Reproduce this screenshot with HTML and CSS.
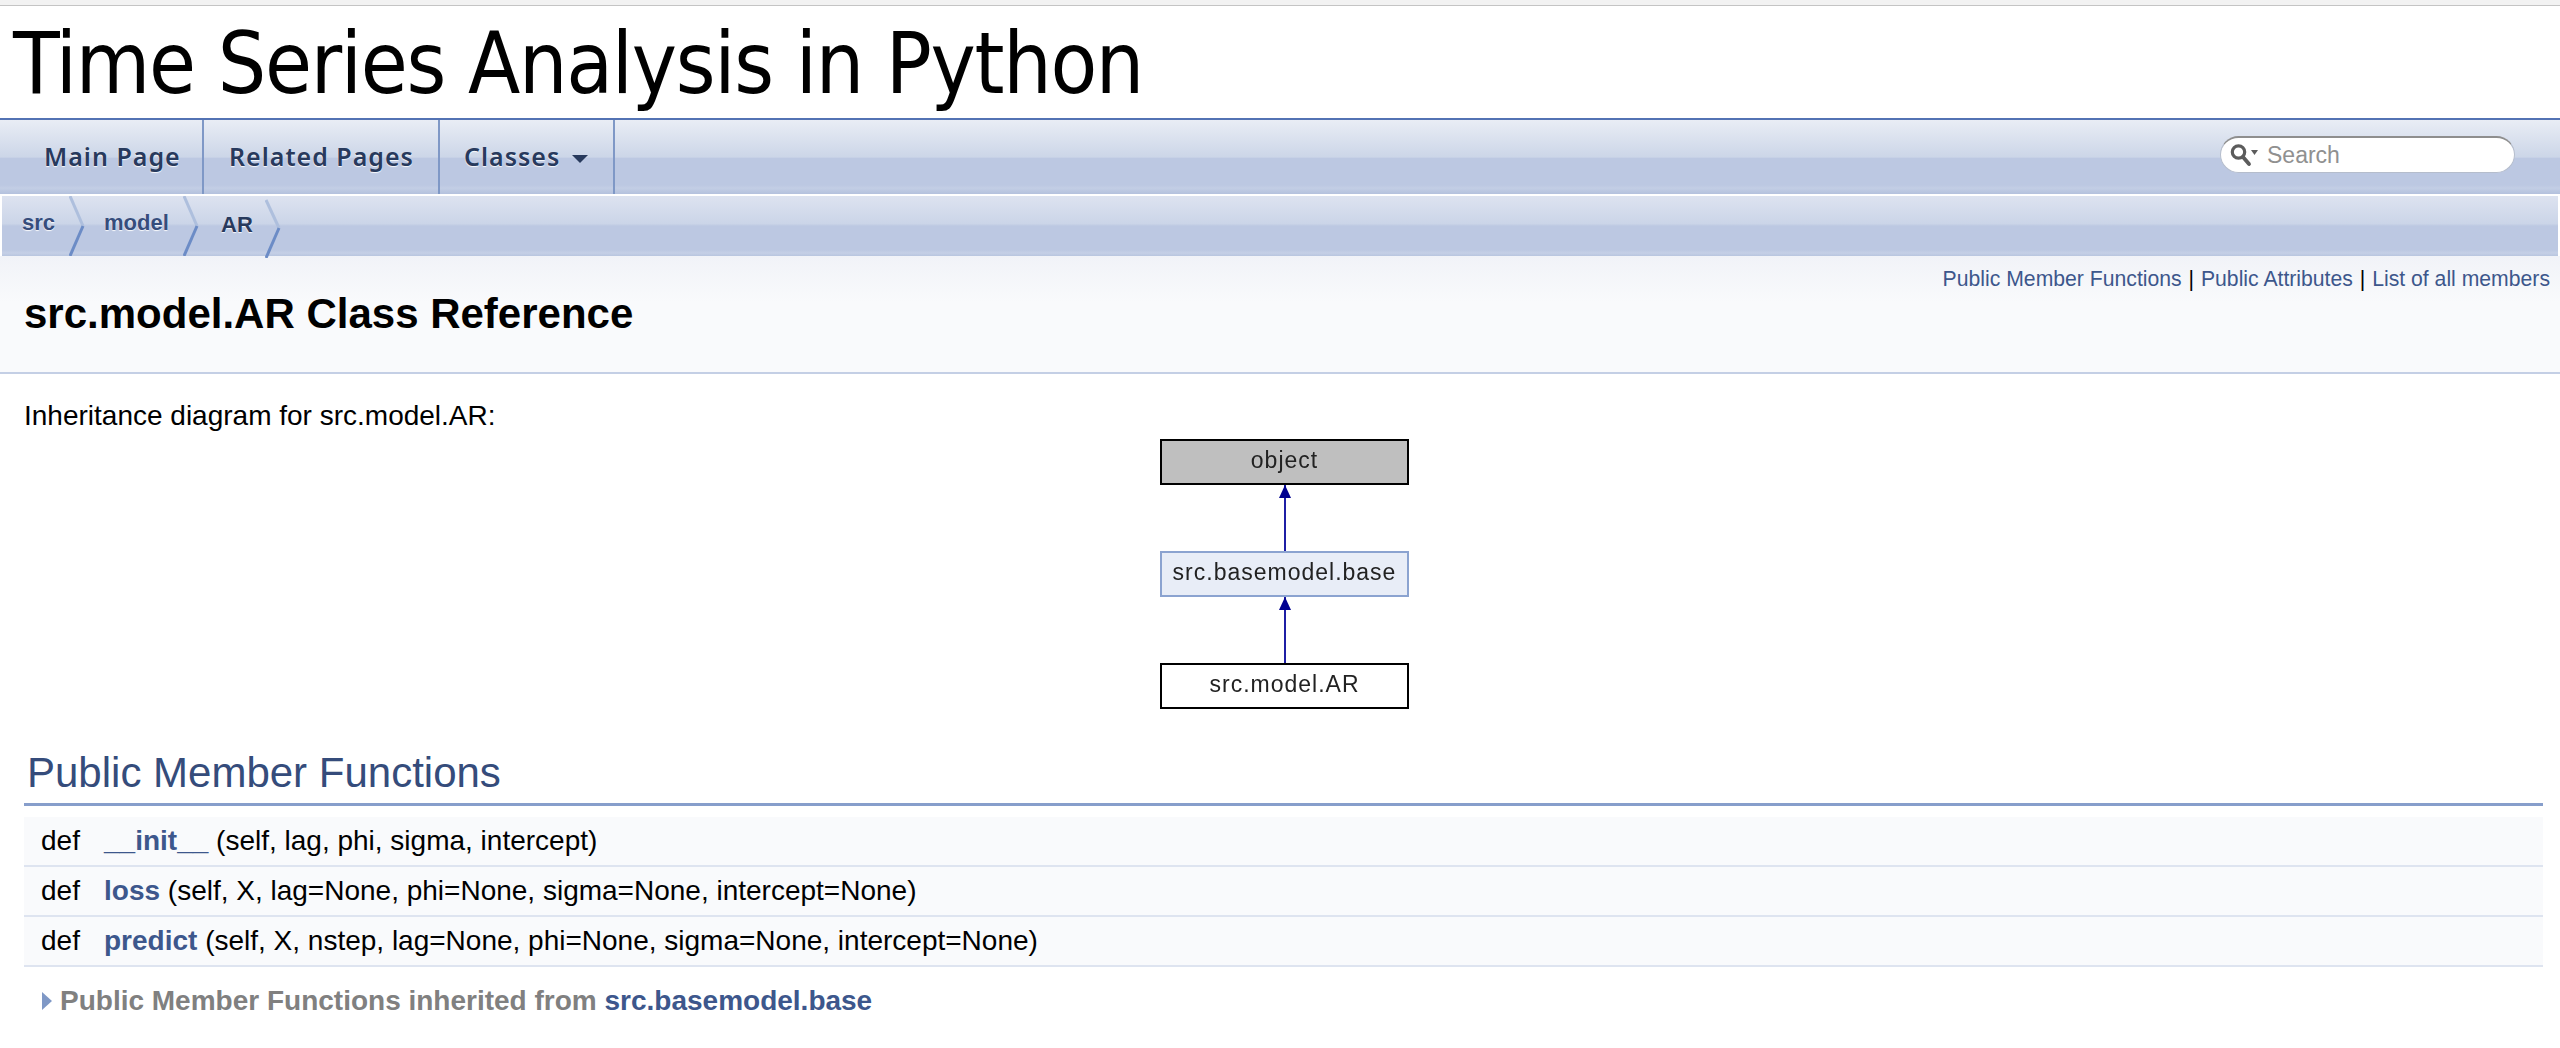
FILE: index.html
```html
<!DOCTYPE html>
<html lang="en">
<head>
    <meta charset="UTF-8">
    <title>Time Series Analysis in Python: src.model.AR Class Reference</title>
    <link rel="stylesheet" href="styles.css">
</head>
<body>
    <div class="topstrip"></div>
    <div class="projectname">Time Series Analysis in Python</div>

    <div class="tabs">
        <ul class="tablist">
            <li class="tab tab-main"><a href="#">Main Page</a></li>
            <li class="tab tab-related"><a href="#">Related Pages</a></li>
            <li class="tab tab-classes"><a href="#">Classes<span class="caret"></span></a></li>
        </ul>
        <div class="searchbox">
            <svg class="searchicon" width="30" height="26" viewBox="0 0 30 26">
                <circle cx="9.500" cy="10" r="6.200" fill="#fff" stroke="#5c5c5c" stroke-width="3.200"/>
                <path d="M14 15l6 7" stroke="#5c5c5c" stroke-width="3.800" stroke-linecap="round"/>
                <path d="M22 8h7l-3.500 5z" fill="#5c5c5c"/>
            </svg>
            <span class="searchtext">Search</span>
        </div>
    </div>

    <div class="navpath">
        <a class="crumb crumb-src" href="#">src
            <svg class="chevron" width="16" height="60" viewBox="0 0 16 60">
                <path d="M1 0L14 30" stroke="#aebfdd" stroke-width="3" fill="none"/>
                <path d="M14 30L1 60" stroke="#6c8cc6" stroke-width="3" fill="none"/>
            </svg>
        </a>
        <a class="crumb crumb-model" href="#">model
            <svg class="chevron" width="16" height="60" viewBox="0 0 16 60">
                <path d="M1 0L14 30" stroke="#aebfdd" stroke-width="3" fill="none"/>
                <path d="M14 30L1 60" stroke="#6c8cc6" stroke-width="3" fill="none"/>
            </svg>
        </a>
        <span class="crumb crumb-ar">AR
            <svg class="chevron" width="16" height="60" viewBox="0 0 16 60">
                <path d="M1 2L14 30" stroke="#aebfdd" stroke-width="3" fill="none"/>
                <path d="M14 30L1 60" stroke="#6c8cc6" stroke-width="3" fill="none"/>
            </svg>
        </span>
    </div>

    <div class="header">
        <div class="summary">
            <a href="#">Public Member Functions</a> <span class="sep">|</span> <a href="#">Public Attributes</a> <span class="sep">|</span> <a href="#">List of all members</a>
        </div>
        <div class="headertitle">src.model.AR Class Reference</div>
    </div>

    <div class="contents">
        <div class="inherit-label">Inheritance diagram for src.model.AR:</div>

        <div class="diagram">
            <div class="node node-object">object</div>
            <div class="edge"></div>
            <div class="node node-base">src.basemodel.base</div>
            <div class="edge"></div>
            <div class="node node-ar">src.model.AR</div>
        </div>

        <h2 class="groupheader">Public Member Functions</h2>
        <div class="memberlist">
            <div class="memrow"><span class="memtype">def</span><span class="memsig"><a href="#">__init__</a> (self, lag, phi, sigma, intercept)</span></div>
            <div class="memrow"><span class="memtype">def</span><span class="memsig"><a href="#">loss</a> (self, X, lag=None, phi=None, sigma=None, intercept=None)</span></div>
            <div class="memrow"><span class="memtype">def</span><span class="memsig"><a href="#">predict</a> (self, X, nstep, lag=None, phi=None, sigma=None, intercept=None)</span></div>
        </div>
        <div class="inherited">
            <span class="arrow"></span>Public Member Functions inherited from <a href="#">src.basemodel.base</a>
        </div>
    </div>
</body>
</html>
```

FILE: styles.css
```css
html, body {
    margin: 0;
    padding: 0;
    height: 1048px;
    overflow: hidden;
    background-color: #fff;
}

body {
    font-family: "Liberation Sans", Arial, sans-serif;
    color: #000;
}

a {
    color: #3D578C;
    text-decoration: none;
}

.topstrip {
    height: 5px;
    background-color: #f2f2f2;
    border-bottom: 1px solid #c4c4c4;
}

.projectname {
    height: 112px;
    padding-left: 13px;
    font-family: "DejaVu Sans", sans-serif;
    font-stretch: condensed;
    font-size: 85px;
    letter-spacing: -1.300px;
    line-height: 116px;
    color: #000;
}

.tabs {
    display: flex;
    justify-content: space-between;
    height: 74px;
    border-top: 2px solid #5373B4;
    background: linear-gradient(#e9edf5 0%, #ccd6e8 50%, #bcc8e2 52%, #bcc8e2 88%, #c3cee5 92%, #b4c1dd 100%);
}

.tablist {
    display: flex;
    margin: 0;
    padding: 0;
    list-style: none;
}

.tab {
    display: flex;
    align-items: center;
    border-right: 2px solid #7f98c6;
    font-family: "Noto Sans", sans-serif;
    font-weight: 600;
    font-size: 25px;
    letter-spacing: 1px;
    padding-bottom: 2px;
}

.tab a {
    color: #283A5D;
    text-shadow: 0 1px 1px rgba(255, 255, 255, 0.9);
}

.tab-main { width: 158px; padding-left: 44px; }
.tab-related { width: 209px; padding-left: 25px; }
.tab-classes { width: 149px; padding-left: 24px; }

.caret {
    display: inline-block;
    margin-left: 12px;
    vertical-align: 3px;
    border-top: 8px solid #283A5D;
    border-left: 8px solid transparent;
    border-right: 8px solid transparent;
}

.searchbox {
    display: flex;
    align-items: center;
    width: 295px;
    height: 37px;
    margin: 16px 45px 0 0;
    padding-left: 8px;
    box-sizing: border-box;
    background-color: #fff;
    border: 1px solid #b5bdcc;
    border-top: 2px solid #8e8e8e;
    border-radius: 19px;
}

.searchtext {
    margin-left: 8px;
    font-size: 23px;
    color: #909090;
}

.navpath {
    display: flex;
    height: 60px;
    margin: 2px 2px 0;
    background: linear-gradient(#dde3f0 0%, #cbd5e8 46%, #bcc8e2 50%, #bcc8e2 90%, #c5d0e6 95%, #b8c5df 100%);
}

.crumb {
    display: flex;
    align-items: center;
    justify-content: space-between;
    height: 60px;
    box-sizing: border-box;
    font-size: 22px;
    font-weight: 700;
    color: #364D7C;
    text-shadow: 0 1px 1px rgba(255, 255, 255, 0.9);
    padding-bottom: 6px;
}

.chevron {
    flex: none;
    margin-bottom: -6px;
}

.crumb-src { width: 83px; padding-left: 20px; }
.crumb-model { width: 114px; padding-left: 19px; }
.crumb-ar { width: 82px; padding: 0 0 2px 22px; color: #283A5D; }

.header {
    height: 116px;
    background: linear-gradient(#f1f3f8 0%, #f9fafc 40%);
    border-bottom: 2px solid #C4CFE5;
}

.summary {
    float: right;
    padding: 9px 10px 0 0;
    font-size: 21.200px;
    line-height: 28px;
}

.sep {
    margin: 0 1px;
}

.headertitle {
    padding: 35px 0 0 24px;
    font-size: 42px;
    font-weight: 700;
    line-height: 46px;
}

.contents {
    margin: 0 17px 0 24px;
}

.inherit-label {
    margin-top: 26px;
    font-size: 28px;
    line-height: 32px;
}

.diagram {
    display: flex;
    flex-direction: column;
    align-items: center;
    width: 249px;
    margin: 7px 0 0 1136px;
    font-size: 23px;
    letter-spacing: 1px;
    color: #222;
    filter: blur(0.4px);
}

.node {
    width: 100%;
    height: 46px;
    box-sizing: border-box;
    text-align: center;
    line-height: 38px;
    border: 2px solid #000;
}

.node-object { background-color: #bfbfbf; }
.node-base { background-color: #E8EDF7; border-color: #8BA3D0; }
.node-ar { background-color: #fff; }

.edge {
    position: relative;
    width: 2px;
    height: 66px;
    background-color: #1f1fa5;
}

.edge::before {
    content: "";
    position: absolute;
    top: 0;
    left: -5px;
    border-bottom: 13px solid #000090;
    border-left: 6px solid transparent;
    border-right: 6px solid transparent;
}

.groupheader {
    margin: 40px 0 0;
    padding: 0 0 8px 3px;
    height: 46px;
    font-size: 42px;
    font-weight: 400;
    line-height: 48px;
    color: #354C7B;
    border-bottom: 3px solid #879ECB;
}

.memberlist {
    margin-top: 11px;
}

.memrow {
    display: flex;
    align-items: center;
    height: 48px;
    padding-left: 17px;
    font-size: 28px;
    background-color: #F9FAFC;
    border-bottom: 2px solid #DEE4F0;
}

.memtype {
    width: 63px;
}

.memsig a {
    font-weight: 700;
    color: #3D578C;
}

.inherited {
    display: flex;
    align-items: center;
    margin-top: 18px;
    padding-left: 18px;
    font-size: 28px;
    font-weight: 700;
    color: #808080;
    white-space: pre;
}

.arrow {
    width: 0;
    height: 0;
    margin-right: 8px;
    border-left: 10px solid #7f98c6;
    border-top: 9px solid transparent;
    border-bottom: 9px solid transparent;
}
```
